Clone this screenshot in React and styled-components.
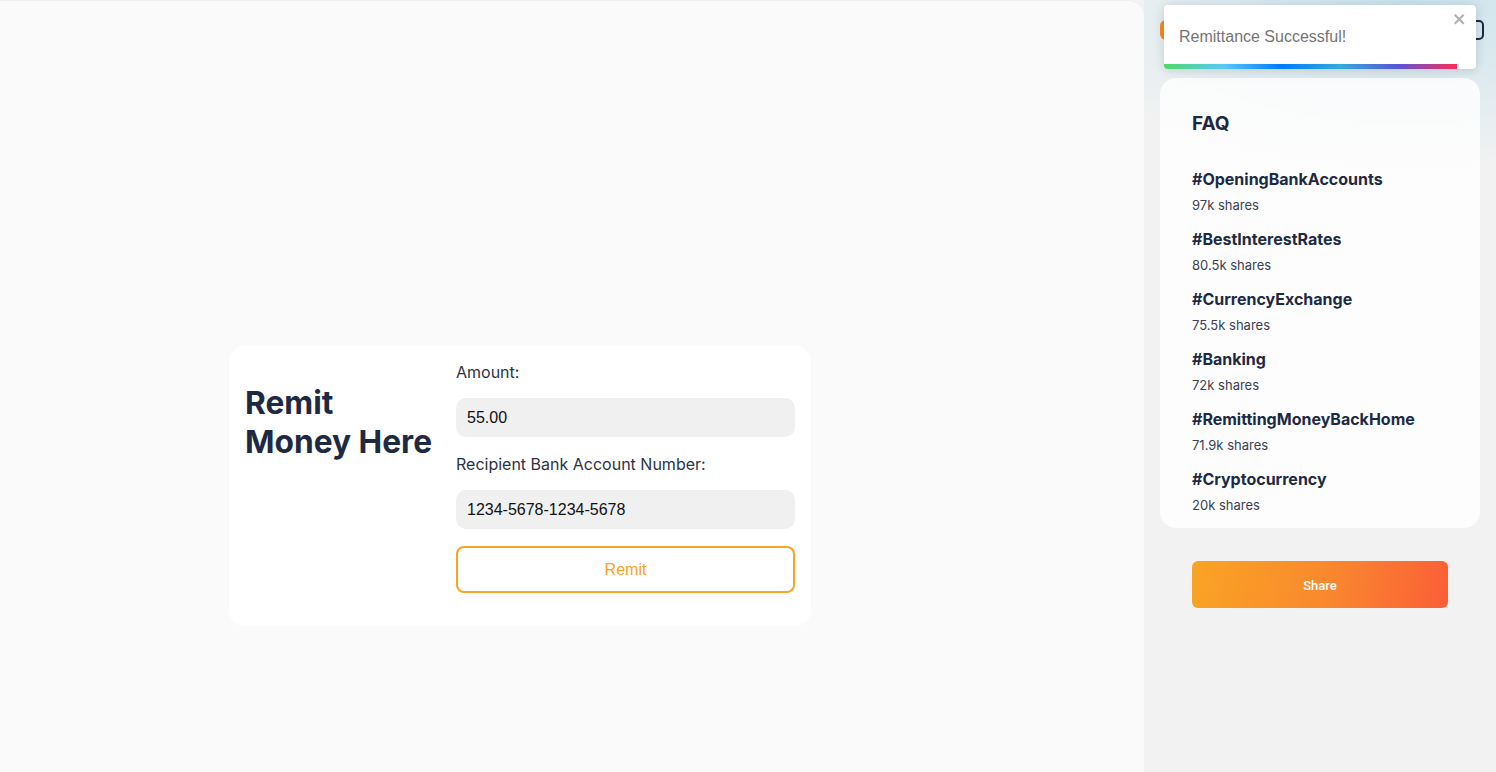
import React from 'react';
import styled, { createGlobalStyle } from 'styled-components';

const GlobalStyle = createGlobalStyle`
  html, body { margin: 0; padding: 0; }
  body {
    font-family: Inter, "Liberation Sans", sans-serif;
    background: #f2f2f2;
    overflow: hidden;
  }
  * { box-sizing: border-box; }
`;

const faqs = [
  { tag: '#OpeningBankAccounts', shares: '97k shares' },
  { tag: '#BestInterestRates', shares: '80.5k shares' },
  { tag: '#CurrencyExchange', shares: '75.5k shares' },
  { tag: '#Banking', shares: '72k shares' },
  { tag: '#RemittingMoneyBackHome', shares: '71.9k shares' },
  { tag: '#Cryptocurrency', shares: '20k shares' },
];

const App = () => {
  return (
    <>
      <GlobalStyle />
      <Layout>
        <Main>
          <RemitCard>
            <Heading>Remit<br />Money Here</Heading>
            <Form onSubmit={(e) => e.preventDefault()}>
              <Label>Amount:</Label>
              <Input defaultValue='55.00' />
              <Label>Recipient Bank Account Number:</Label>
              <Input defaultValue='1234-5678-1234-5678' />
              <RemitButton type='submit'>Remit</RemitButton>
            </Form>
          </RemitCard>
        </Main>
        <Sidebar>
          <TopBar>
            <Pill />
            <IconBox />
          </TopBar>
          <FaqCard>
            <FaqTitle>FAQ</FaqTitle>
            {faqs.map((f) => (
              <FaqItem key={f.tag}>
                <Tag>{f.tag}</Tag>
                <Shares>{f.shares}</Shares>
              </FaqItem>
            ))}
          </FaqCard>
          <ShareButton>Share</ShareButton>
          <Toast>
            <ToastText>Remittance Successful!</ToastText>
            <Close aria-label='close'>
              <svg width='14' height='16' viewBox='0 0 14 16' aria-hidden='true'>
                <path
                  fill='currentColor'
                  fillRule='evenodd'
                  d='M7.71 8.23l3.75 3.75-1.48 1.48-3.75-3.75-3.75 3.75L1 11.98l3.75-3.75L1 4.48 2.48 3l3.75 3.75L9.98 3l1.48 1.48-3.75 3.75z'
                />
              </svg>
            </Close>
            <Progress />
          </Toast>
        </Sidebar>
      </Layout>
    </>
  );
};

const Layout = styled.div`
  display: grid;
  grid-template-columns: 1144px 1fr;
  height: 772px;
`;

const Main = styled.main`
  background: #fafafa;
  border-top: 1px solid #efefef;
  border-top-right-radius: 16px;
  display: flex;
  align-items: flex-start;
  padding: 345px 0 0 229px;
`;

const RemitCard = styled.div`
  width: 582px;
  background: #fff;
  border-radius: 16px;
  padding: 14px 16px 33px 16px;
  display: grid;
  grid-template-columns: 211px 339px;
  align-items: start;
`;

const Heading = styled.h1`
  margin: 23px 0 0;
  font-size: 31.7px;
  line-height: 39px;
  font-weight: 700;
  color: #1e2a44;
`;

const Form = styled.form`
  display: flex;
  flex-direction: column;
`;

const Label = styled.label`
  font-size: 16px;
  line-height: 24px;
  color: #2b3445;
  margin-bottom: 14px;
`;

const Input = styled.input`
  height: 39px;
  border: none;
  outline: none;
  border-radius: 10px;
  background: #eff0ef;
  padding: 0 11px;
  font-family: "Liberation Sans", Arial, sans-serif;
  font-size: 16px;
  color: #111;
  margin-bottom: 15px;
`;

const RemitButton = styled.button`
  margin-top: 2px;
  height: 47px;
  border: 2px solid #f9a424;
  border-radius: 8px;
  background: #fff;
  color: #f9a424;
  font-family: "Liberation Sans", Arial, sans-serif;
  font-size: 16px;
  cursor: pointer;
`;

const Sidebar = styled.aside`
  position: relative;
  background:
    radial-gradient(ellipse 380px 170px at 75% 0%, rgba(190, 222, 236, 0.75), rgba(242, 242, 242, 0) 100%),
    #f2f2f2;
  padding: 18px 16px 0 16px;
  display: flex;
  flex-direction: column;
`;

const TopBar = styled.div`
  display: flex;
  justify-content: space-between;
  align-items: center;
  height: 24px;
  margin-bottom: 36px;
`;

const Pill = styled.div`
  width: 60px;
  height: 20px;
  border-radius: 6px;
  background: linear-gradient(90deg, #f98a1e, #f9a424);
`;

const IconBox = styled.div`
  width: 20px;
  height: 20px;
  border: 2px solid #1e2a44;
  border-radius: 5px;
  margin-right: -4px;
`;

const FaqCard = styled.section`
  background: rgba(255, 255, 255, 0.8);
  border-radius: 16px;
  padding: 33px 32px 0;
`;

const FaqTitle = styled.h3`
  margin: 0 0 31px;
  font-size: 19px;
  line-height: 26px;
  font-weight: 700;
  color: #1e2a44;
`;

const FaqItem = styled.div`
  display: flex;
  flex-direction: column;
  height: 60px;
`;

const Tag = styled.div`
  font-size: 16px;
  line-height: 22px;
  font-weight: 700;
  color: #1e2a44;
`;

const Shares = styled.div`
  margin-top: 6px;
  font-size: 13px;
  line-height: 18px;
  color: #3a4253;
`;

const ShareButton = styled.button`
  margin: 33px 32px 0;
  height: 47px;
  padding-top: 2px;
  border: none;
  border-radius: 6px;
  background: linear-gradient(100deg, #f9a424 0%, #f98a2e 50%, #fb5e37 100%);
  color: #fff;
  font-family: Roboto, "Liberation Sans", sans-serif;
  font-size: 13px;
  font-weight: 500;
  cursor: pointer;
`;

const Toast = styled.div`
  position: absolute;
  top: 5px;
  left: 20px;
  width: 312px;
  height: 64px;
  background: #fff;
  border-radius: 4px;
  box-shadow: 0 1px 10px 0 rgba(0, 0, 0, 0.1), 0 2px 15px 0 rgba(0, 0, 0, 0.05);
  overflow: hidden;
  display: flex;
  align-items: center;
  padding: 0 15px;
`;

const ToastText = styled.div`
  font-family: "Liberation Sans", Arial, sans-serif;
  font-size: 16px;
  color: #757575;
`;

const Close = styled.button`
  position: absolute;
  top: 6px;
  right: 9px;
  padding: 0;
  border: none;
  background: transparent;
  color: #000;
  opacity: 0.3;
  display: flex;
  svg { width: 14px; height: 16px; }
`;

const Progress = styled.div`
  position: absolute;
  left: 0;
  bottom: 0;
  width: 94%;
  height: 5px;
  background: linear-gradient(to right, #4cd964, #5ac8fa, #007aff, #34aadc, #5856d6, #ff2d55);
`;

export default App;
